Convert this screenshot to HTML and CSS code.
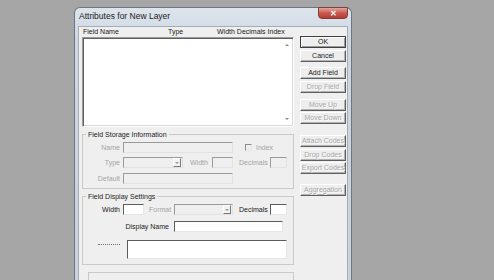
FILE: index.html
```html
<!DOCTYPE html>
<html lang="en">

<head>
    <meta charset="UTF-8">
    <meta name="viewport" content="width=device-width, initial-scale=1.0">
    <title>Attributes for New Layer</title>
    <link rel="stylesheet" href="styles.css">
</head>

<body>
    <div class="dialog">
        <div class="titlebar">
            <span class="title">Attributes for New Layer</span>
            <span class="close">✕</span>
        </div>

        <div class="client">
            <div class="left">
                <div class="cols">
                    <span class="col-name">Field Name</span>
                    <span class="col-type">Type</span>
                    <span>Width Decimals Index</span>
                </div>

                <div class="list">
                    <div class="scroll">
                        <span class="arrow up"></span>
                        <span class="arrow down"></span>
                    </div>
                </div>

                <fieldset class="group">
                    <legend>Field Storage Information</legend>
                    <div class="row">
                        <span class="lbl off">Name</span>
                        <span class="field off w110"></span>
                        <span class="check"></span>
                        <span class="off">Index</span>
                    </div>
                    <div class="row gap4">
                        <span class="lbl off">Type</span>
                        <span class="select off w60"><span class="drop"></span></span>
                        <span class="off l-width">Width</span>
                        <span class="field off w21"></span>
                        <span class="off l-dec">Decimals</span>
                        <span class="field off w17"></span>
                    </div>
                    <div class="row gap5">
                        <span class="lbl off">Default</span>
                        <span class="field off w110"></span>
                    </div>
                </fieldset>

                <fieldset class="group display">
                    <legend>Field Display Settings</legend>
                    <div class="row">
                        <span class="lbl">Width</span>
                        <span class="field w21"></span>
                        <span class="off l-format">Format</span>
                        <span class="select off w59"><span class="drop"></span></span>
                        <span class="l-dec">Decimals</span>
                        <span class="field w17"></span>
                    </div>
                    <div class="row gap6">
                        <span class="lbl wide">Display Name</span>
                        <span class="field w109"></span>
                    </div>
                    <div class="row memo-row">
                        <span class="lbl"><span class="dash"></span></span>
                        <span class="memo"></span>
                    </div>
                </fieldset>

                <div class="group next"></div>
            </div>

            <div class="buttons">
                <button class="btn default">OK</button>
                <button class="btn m2">Cancel</button>
                <button class="btn m5">Add Field</button>
                <button class="btn m2" disabled>Drop Field</button>
                <button class="btn m6" disabled>Move Up</button>
                <button class="btn m1" disabled>Move Down</button>
                <button class="btn m11" disabled>Attach Codes</button>
                <button class="btn m2" disabled>Drop Codes</button>
                <button class="btn m1" disabled>Export Codes</button>
                <button class="btn m10" disabled>Aggregation</button>
            </div>
        </div>
    </div>
</body>

</html>
```

FILE: styles.css
```css
* {
    margin: 0;
    padding: 0;
    box-sizing: border-box;
}

body {
    font-family: "Liberation Sans", Arial, sans-serif;
    font-size: 7px;
    color: #1a1a1a;
    background-color: #a6a6a6;
    height: 280px;
    overflow: hidden;
}

/* window frame */
.dialog {
    margin: 7px 0 0 74px;
    width: 278px;
    height: 273px;
    padding: 0 3px;
    background: linear-gradient(#dde4ec, #cfd8e2 30px, #c8d2dd);
    border: 1px solid #6d7680;
    border-bottom: none;
    border-radius: 6px 6px 0 0;
}

.titlebar {
    display: flex;
    height: 18px;
}

.title {
    font-size: 8.5px;
    line-height: 11px;
    padding: 3px 0 0 1px;
    color: #1c1c1c;
}

.close {
    margin: -1px 0 0 auto;
    width: 30px;
    height: 12px;
    font-size: 8px;
    font-weight: bold;
    line-height: 11px;
    text-align: center;
    color: #fff;
    background: linear-gradient(#e3a59d, #c95a4f 50%, #b53b30);
    border: 1px solid #80403a;
    border-radius: 0 0 4px 4px;
}

.client {
    display: flex;
    gap: 6px;
    height: 255px;
    overflow: hidden;
    padding: 0 1px 0 3px;
    background-color: #efefef;
    border: 1px solid #a5adb6;
    border-bottom: none;
}

.left {
    width: 212px;
}

/* list of fields */
.cols {
    display: flex;
    height: 10px;
    line-height: 10px;
    padding-left: 1px;
}

.col-name {
    width: 85px;
}

.col-type {
    width: 49px;
}

.list {
    display: flex;
    justify-content: flex-end;
    height: 90px;
    background-color: #fff;
    border: 1px solid #9c9c9c;
    border-right-color: #fff;
    border-bottom-color: #fff;
    box-shadow: inset 1px 1px #5f5f5f, inset -1px -1px #dadada;
}

.scroll {
    display: flex;
    flex-direction: column;
    justify-content: space-between;
    width: 11px;
    padding: 6px 0 6px 3px;
}

.arrow {
    width: 0;
    height: 0;
    border-left: 2px solid transparent;
    border-right: 2px solid transparent;
}

.arrow.up {
    border-bottom: 2px solid #8a8a8a;
}

.arrow.down {
    border-top: 2px solid #8a8a8a;
}

/* group boxes */
.group {
    margin-top: 3px;
    padding: 3px 0 4px 0;
    border: 1px solid #c9c9c9;
}

.group legend {
    margin-left: 3px;
    padding: 0 2px;
    line-height: 9px;
}

.group.display {
    padding-bottom: 5px;
}

.group.next {
    margin: 7px 0 0 6px;
    height: 20px;
}

.row {
    display: flex;
    align-items: center;
    height: 11px;
}

.gap4 {
    margin-top: 4px;
}

.gap5 {
    margin-top: 5px;
}

.gap6 {
    margin-top: 6px;
}

.memo-row {
    align-items: flex-start;
    height: 19px;
    margin-top: 8px;
}

.lbl {
    flex: none;
    width: 37px;
    margin-right: 3px;
    text-align: right;
}

.lbl.wide {
    width: 86px;
    margin-right: 5px;
}

.memo-row .lbl {
    display: flex;
    justify-content: flex-end;
    margin-right: 7px;
    padding-top: 4px;
}

.dash {
    width: 22px;
    border-top: 1px dotted #6e6e6e;
}

.off {
    color: #a4a4a4;
}

.l-width {
    width: 18px;
    margin: 0 4px 0 7px;
}

.l-dec {
    width: 27px;
    margin: 0 4px 0 6px;
    white-space: nowrap;
}

.l-format {
    width: 21px;
    margin: 0 4px 0 5px;
}

/* inputs */
.field, .memo {
    flex: none;
    height: 11px;
    background-color: #fff;
    border: 1px solid #5c5c5c;
    border-right-color: #e6e6e6;
    border-bottom-color: #e6e6e6;
}

.field.off, .select {
    background-color: #efefef;
    border: 1px solid #9a9a9a;
    border-right-color: #e2e2e2;
    border-bottom-color: #e2e2e2;
}

.memo {
    width: 160px;
    height: 19px;
}

.w110 { width: 110px; }
.w109 { width: 109px; }
.w60 { width: 60px; }
.w59 { width: 59px; }
.w21 { width: 21px; }
.w17 { width: 17px; }

.select {
    flex: none;
    display: flex;
    justify-content: flex-end;
    height: 11px;
    padding: 0 1px 0 0;
}

.drop {
    display: flex;
    align-items: center;
    justify-content: center;
    width: 8px;
    height: 9px;
    background-color: #f2f2f2;
    border: 1px solid #fff;
    border-right-color: #7a7a7a;
    border-bottom-color: #7a7a7a;
}

.drop::after {
    content: "";
    border-left: 2px solid transparent;
    border-right: 2px solid transparent;
    border-top: 2px solid #9a9a9a;
}

.check {
    width: 7px;
    height: 7px;
    margin: 0 4px 0 12px;
    border: 1px solid #8c8c8c;
    border-right-color: #e8e8e8;
    border-bottom-color: #e8e8e8;
}

/* command buttons */
.buttons {
    display: flex;
    flex-direction: column;
    width: 46px;
    padding-top: 9px;
}

.btn {
    height: 12px;
    font-family: inherit;
    font-size: 7px;
    line-height: 10px;
    color: #1a1a1a;
    background-color: #eeeeee;
    border: 1px solid #fff;
    border-right-color: #5e5e5e;
    border-bottom-color: #5e5e5e;
    box-shadow: inset -1px -1px #b4b4b4;
}

.btn.default {
    border-color: #3f3f3f;
    box-shadow: inset 1px 1px #fff, inset -1px -1px #9a9a9a;
}

.btn:disabled {
    color: #a6a6a6;
    text-shadow: 1px 1px #fbfbfb;
}

.m1 { margin-top: 1px; }
.m2 { margin-top: 2px; }
.m5 { margin-top: 5px; }
.m6 { margin-top: 6px; }
.m10 { margin-top: 10px; }
.m11 { margin-top: 11px; }
```
